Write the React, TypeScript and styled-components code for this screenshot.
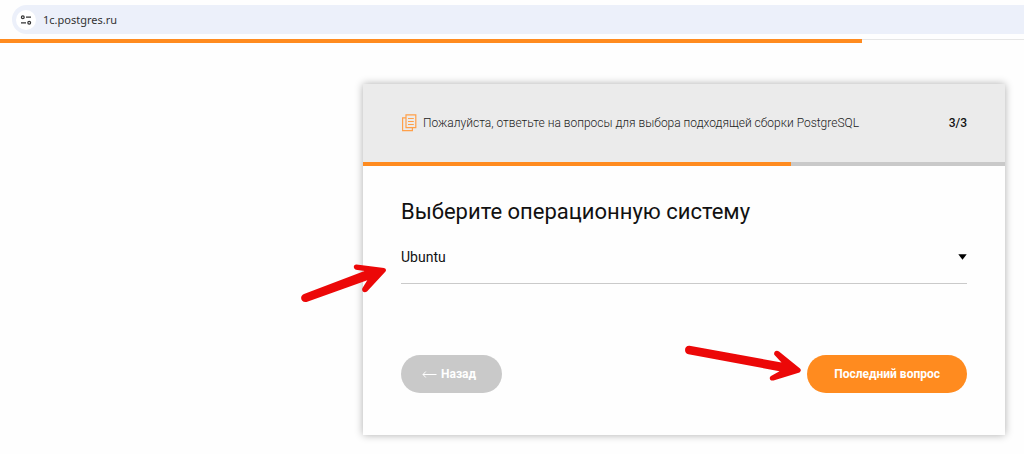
import React from "react";
import styled, { createGlobalStyle } from "styled-components";

const GlobalStyle = createGlobalStyle`
  * { box-sizing: border-box; }
  body {
    margin: 0;
    background: #fefefe;
    color: #111;
    font-family: Roboto, "Liberation Sans", sans-serif;
    overflow-x: hidden;
  }
`;

const Toolbar = styled.header`
  display: flex;
  padding: 5px 0 5px 12px;
  background: #fefefe;
  border-bottom: 1px solid #e6e6e6;
`;

const AddressBar = styled.div`
  flex: 1;
  display: flex;
  align-items: center;
  gap: 7px;
  height: 29px;
  padding-left: 4px;
  background: #ecf0fa;
  border-radius: 15px 0 0 15px;
`;

const SiteInfo = styled.button`
  display: flex;
  align-items: center;
  justify-content: center;
  width: 20px;
  height: 20px;
  padding: 0;
  border: 0;
  border-radius: 50%;
  background: #fff;
`;

const AddressInput = styled.input`
  flex: 1;
  padding: 0;
  border: 0;
  outline: 0;
  background: transparent;
  color: #333;
  font: 11px/20px "Noto Sans", "Open Sans", sans-serif;
`;

const Progress = styled.div<{ $track: string }>`
  height: 4px;
  background: ${(p) => p.$track};
`;

const PageProgress = styled(Progress)`
  margin-top: -1px;
`;

const ProgressFill = styled.div`
  height: 100%;
  background: #ff8b1f;
`;

const Main = styled.main`
  display: flex;
  justify-content: flex-end;
  padding: 41px 19px 18px;
`;

const Card = styled.section`
  position: relative;
  flex: 0 1 642px;
  background: #fefefe;
  box-shadow: 0 0 8px rgba(0, 0, 0, 0.32);
`;

const CardHeader = styled.div`
  display: flex;
  align-items: center;
  gap: 6px;
  height: 78px;
  padding: 0 38px;
  background: #ebebeb;
`;

const Hint = styled.p`
  flex: 1;
  margin: 0;
  color: #222;
  font-size: 12px;
  font-weight: 300;
  line-height: 16px;
`;

const Counter = styled.span`
  font-size: 12px;
  font-weight: 500;
  line-height: 16px;
`;

const Form = styled.form`
  display: flex;
  flex-direction: column;
  padding: 32px 38px 42px;
`;

const Question = styled.label`
  font-size: 22px;
  line-height: 28px;
`;

const SelectBox = styled.div`
  display: grid;
  grid-template-columns: 1fr 9px;
  align-items: center;
  margin-top: 16px;
  padding-bottom: 11px;
  border-bottom: 1px solid #cacaca;
`;

const Select = styled.select`
  grid-area: 1 / 1 / 2 / 3;
  appearance: none;
  height: 30px;
  padding: 0;
  border: 0;
  outline: 0;
  background: transparent;
  color: #111;
  font: 14px/20px Roboto, sans-serif;
`;

const Caret = styled.svg`
  grid-area: 1 / 2;
  pointer-events: none;
`;

const Actions = styled.div`
  display: flex;
  justify-content: space-between;
  margin-top: 71px;
`;

const PillButton = styled.button<{ $color: string }>`
  display: flex;
  align-items: center;
  justify-content: center;
  gap: 4px;
  height: 38px;
  padding: 0 27px;
  border: 0;
  border-radius: 19px;
  background: ${(p) => p.$color};
  color: #fff;
  font: 700 12px/16px Roboto, sans-serif;
`;

const BackButton = styled(PillButton)`
  padding: 0 26px 0 21px;
`;

const Pointer = styled.svg<{ $x: number; $y: number }>`
  position: absolute;
  left: ${(p) => p.$x}px;
  top: ${(p) => p.$y}px;
  pointer-events: none;
`;

export default function App() {
  return (
    <>
      <GlobalStyle />
      <Toolbar>
        <AddressBar>
          <SiteInfo type="button" aria-label="Сведения о сайте">
            <svg width="12" height="12" viewBox="0 0 12 12" fill="none" stroke="#333" strokeWidth="1.2">
              <circle cx="2.8" cy="3.2" r="1.4" />
              <path d="M6 3.2h5M1 8.8h5" />
              <circle cx="9.2" cy="8.8" r="1.4" />
            </svg>
          </SiteInfo>
          <AddressInput aria-label="Адрес" defaultValue="1c.postgres.ru" />
        </AddressBar>
      </Toolbar>
      <PageProgress $track="transparent">
        <ProgressFill style={{ width: "84.2%" }} />
      </PageProgress>
      <Main>
        <Card>
          <CardHeader>
            <svg width="16" height="18" viewBox="0 0 16 18" fill="none" stroke="#ffa04a" strokeWidth="1.2">
              <path d="M5 .8h9.800v12.800H5zM4.500 3.800H1.600v12.900h9.800v-2.800" />
              <path d="M7 4.500h5.800M7 7.500h5.800M7 10.500h5.800" />
            </svg>
            <Hint>Пожалуйста, ответьте на вопросы для выбора подходящей сборки PostgreSQL</Hint>
            <Counter>3/3</Counter>
          </CardHeader>
          <Progress $track="#c9c9c9">
            <ProgressFill style={{ width: "66.6%" }} />
          </Progress>
          <Form onSubmit={(e) => e.preventDefault()}>
            <Question htmlFor="os">Выберите операционную систему</Question>
            <SelectBox>
              <Select id="os" defaultValue="Ubuntu">
                <option>Ubuntu</option>
              </Select>
              <Caret width="9" height="6" viewBox="0 0 9 6">
                <path d="M.3.3h8.4L4.5 5.8z" fill="#000" />
              </Caret>
            </SelectBox>
            <Actions>
              <BackButton type="button" $color="#c9c9c9">
                <svg width="15" height="8" viewBox="0 0 15 8" fill="none" stroke="#fff" strokeWidth="1">
                  <path d="M14.5 4.5H1M3.8 1.5L1 4.5l2.800 3" />
                </svg>
                Назад
              </BackButton>
              <PillButton type="submit" $color="#ff8b1f">Последний вопрос</PillButton>
            </Actions>
          </Form>
          <Pointer $x={-63} $y={176} width="90" height="50" viewBox="0 0 90 50" fill="#ec0808">
            <path d="M4 34L64.500 11L56 9.800C53 8.800 53 4.200 56.500 4.400L84 8Q87 9 85.500 11.500L67 31.500C64 33.500 61 31 62.500 28L67.300 20.300L6.500 42C1 43 -1 36 4 34Z" />
          </Pointer>
          <Pointer $x={317} $y={256} width="130" height="50" viewBox="0 0 130 50" fill="#ec0808">
            <path d="M9.500 5.800L101.500 22.500L94.300 14.800C93.300 11.500 96.500 9.500 99 11.500L120 28.500Q122 30.500 119.500 32.500L93.500 40.500C89.500 41.200 88.800 37.300 91 36L99.500 31.200L8.500 14.300C3.500 13 4 5.500 9.500 5.800Z" />
          </Pointer>
        </Card>
      </Main>
    </>
  );
}
